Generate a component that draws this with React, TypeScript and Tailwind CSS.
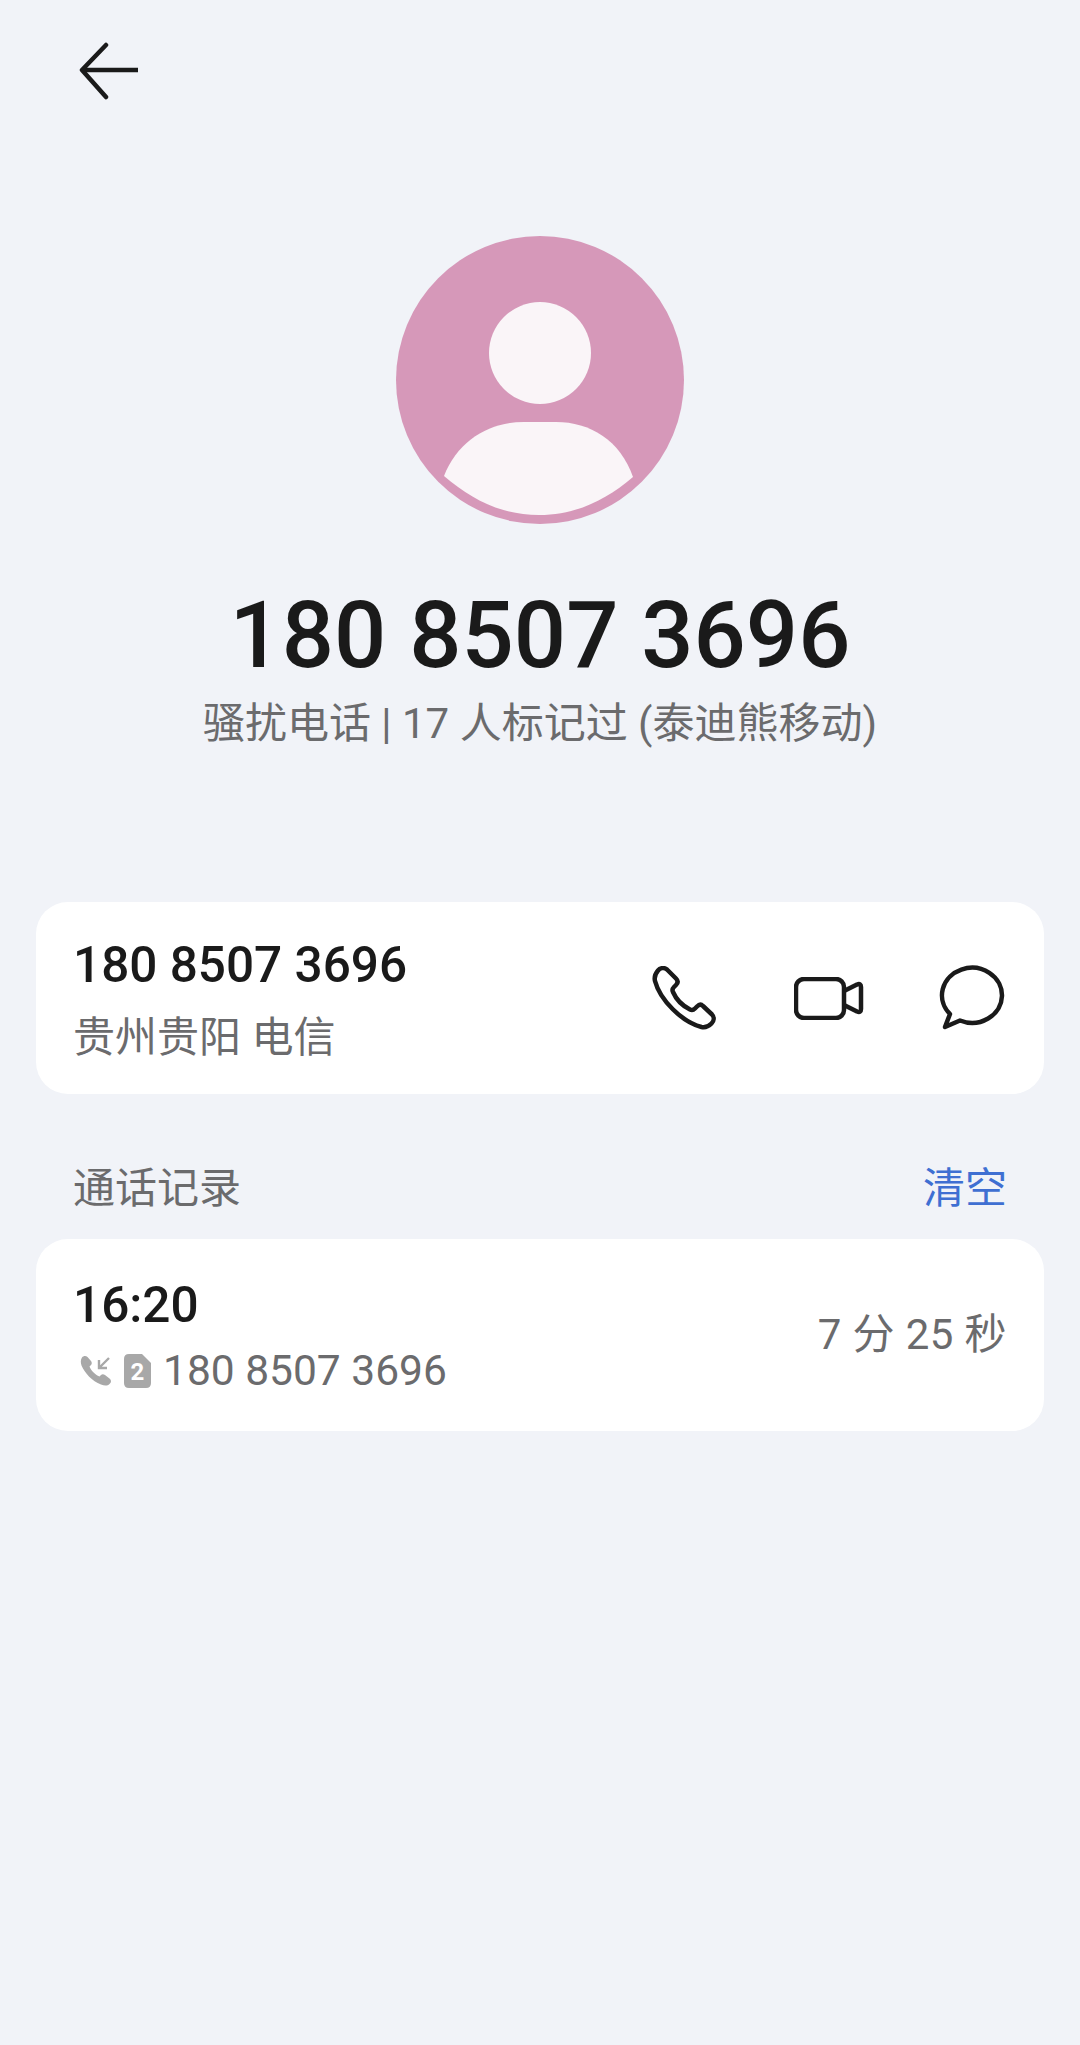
import React from 'react';

const cjk = "font-['Roboto','Noto_Sans_CJK_SC',sans-serif]";

function BackArrow() {
  return (
    <svg width="62" height="60" viewBox="0 0 62 60" fill="none" stroke="#1a1a1a" strokeWidth="4.5" strokeLinecap="round" strokeLinejoin="round">
      <path d="M27 3 L3 28 L27 55" />
      <path d="M3 28 H59" strokeLinecap="butt" />
    </svg>
  );
}

function Avatar() {
  return (
    <svg width="288" height="288" viewBox="0 0 288 288">
      <circle cx="144" cy="144" r="144" fill="#d698b9" />
      <circle cx="144" cy="117" r="51" fill="#faf5f8" />
      <path d="M48 176 C62 140 94 122 128 122 H160 C194 122 224 140 237 177 C210 200 180 215 143 215 C106 215 76 200 48 176 Z" fill="#faf5f8" transform="translate(0 64)" />
    </svg>
  );
}

function PhoneIcon() {
  return (
    <svg width="64" height="64" viewBox="0 0 64 64" fill="none" stroke="#1a1a1a" strokeWidth="4.5" strokeLinejoin="round">
      <path d="M6 4.5 C8 2 12 1 15 3.5 L24 12.5 C26.5 15 26 17 24 19 L22 21 C20.5 22.5 20 24 21 26 C24 33 31 40 38 43.5 C40 44.5 41.5 44 43 42.5 L45 40.5 C47 38.5 49 38 51 40 L60 48.5 C62.5 51 62 55 59.5 57.5 C57 60 54 62 49.5 61 C30 56 8 34 3 15 C2 11 3.5 7.5 6 4.5 Z" />
    </svg>
  );
}

function VideoIcon() {
  return (
    <svg width="70" height="43" viewBox="0 0 70 43" fill="none" stroke="#1a1a1a" strokeWidth="4.5" strokeLinejoin="round">
      <rect x="2" y="2" width="48" height="39" rx="8" />
      <path d="M50 14 L63 7.5 Q67 6 67 10 V32 Q67 36 63 34.5 L50 28" />
    </svg>
  );
}

function ChatIcon() {
  return (
    <svg width="68" height="66" viewBox="0 0 68 66" fill="none" stroke="#1a1a1a" strokeWidth="4.5" strokeLinejoin="round">
      <path d="M11 49 A30 27.5 0 1 1 21 55.5 L6 62 Z" />
    </svg>
  );
}

function IncomingCallIcon() {
  return (
    <svg width="32" height="31" viewBox="0 0 32 31" fill="#a8a8a8">
      <path d="M2 2.5 C3.5 0.5 6 0.5 7.5 2 L11 6 C12 7.5 12 9 11 10 L9.5 11.5 C11 15.5 15 19.5 19.5 21.5 L21 20 C22 19 23.5 19 25 20 L29.5 23.5 C31.5 25 31.5 27.5 29.5 29 C27.5 31 24.5 31 21 29.5 C12 26 5 18.5 1.5 10.5 C0.5 7.5 0.5 4.5 2 2.5 Z" />
      <path d="M29 3 L20 12 M19 5 V13 H27" fill="none" stroke="#a8a8a8" strokeWidth="2.4" />
    </svg>
  );
}

function SimIcon() {
  return (
    <svg width="27" height="34" viewBox="0 0 27 34">
      <path d="M5 0 H18 L27 9 V29 Q27 34 22 34 H5 Q0 34 0 29 V5 Q0 0 5 0 Z" fill="#a8a8a8" />
      <text x="13.5" y="26" textAnchor="middle" fontSize="24" fontWeight="700" fill="#ffffff" fontFamily="Roboto, sans-serif">2</text>
    </svg>
  );
}

export default function App() {
  return (
    <div className={`w-[1080px] min-h-[2045px] bg-[#f1f3f8] flex flex-col ${cjk}`}>
      <div className="pt-[42px] pl-[79px] h-[236px] shrink-0">
        <BackArrow />
      </div>

      <div className="flex flex-col items-center">
        <Avatar />
        <div className="mt-[58px] text-[92px] leading-[108px] font-medium text-[#1a1a1a]">180 8507 3696</div>
        <div className="mt-[6px] text-[42px] leading-[56px] text-[#6b6b6d]">骚扰电话 | 17 人标记过 (泰迪熊移动)</div>
      </div>

      <div className="mt-[150px] mx-[36px] h-[192px] bg-white rounded-[32px] pl-[37px] pr-[37px] flex items-center justify-between">
        <div className="flex flex-col pt-[4px]">
          <span className="text-[49.5px] leading-[62px] font-medium text-[#1a1a1a]">180 8507 3696</span>
          <span className="text-[42px] leading-[56px] text-[#6b6b6d] mt-[14px]">贵州贵阳 电信</span>
        </div>
        <div className="flex items-center">
          <PhoneIcon />
          <span className="ml-[78px]"><VideoIcon /></span>
          <span className="ml-[75px]"><ChatIcon /></span>
        </div>
      </div>

      <div className="mt-[67px] mx-[73px] flex items-center justify-between h-[56px] text-[42px] leading-[56px]">
        <span className="text-[#6b6b6d]">通话记录</span>
        <span className="text-[#3f6fd2]">清空</span>
      </div>

      <div className="mt-[22px] mx-[36px] h-[192px] bg-white rounded-[32px] pl-[37px] pr-[37px] flex items-center justify-between">
        <div className="flex flex-col">
          <span className="text-[49.5px] leading-[66px] font-medium text-[#1a1a1a]">16:20</span>
          <div className="flex items-center mt-[5px] h-[56px]">
            <span className="ml-[7px] flex"><IncomingCallIcon /></span>
            <span className="ml-[12px] flex"><SimIcon /></span>
            <span className="ml-[12px] text-[42.5px] leading-[56px] text-[#6b6b6d]">180 8507 3696</span>
          </div>
        </div>
        <span className="text-[42px] leading-[56px] tracking-[0.4px] text-[#6b6b6d]">7 分 25 秒</span>
      </div>
    </div>
  );
}
